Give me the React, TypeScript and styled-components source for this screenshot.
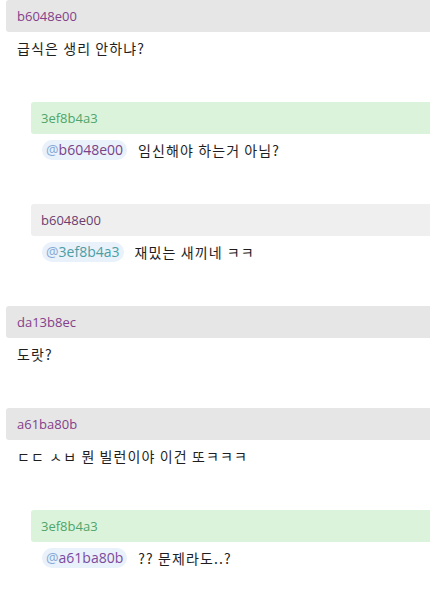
import React from 'react';
import styled, { createGlobalStyle } from 'styled-components';

const GlobalStyle = createGlobalStyle`
  html, body {
    margin: 0;
    padding: 0;
    background: #ffffff;
  }
  body {
    font-family: 'Open Sans', 'Noto Sans CJK KR', sans-serif;
    color: #222;
  }
`;

type Tone = 'gray' | 'light' | 'green';

const headerBg: Record<Tone, string> = {
  gray: '#e6e6e6',
  light: '#efefef',
  green: '#dbf3da',
};

const nameColor: Record<Tone, string> = {
  gray: '#84408a',
  light: '#6b3d6e',
  green: '#4fa56b',
};

const Thread = styled.div`
  width: 430px;
  display: flex;
  flex-direction: column;
`;

const Comment = styled.div<{ $reply?: boolean }>`
  display: flex;
  flex-direction: column;
  margin-left: ${p => (p.$reply ? '31px' : '6px')};
  margin-bottom: 30px;
`;

const Header = styled.div<{ $tone: Tone }>`
  height: 32px;
  line-height: 32px;
  padding-left: ${p => (p.$tone === 'gray' ? '11px' : '10px')};
  background: ${p => headerBg[p.$tone]};
  color: ${p => nameColor[p.$tone]};
  border-radius: 3px 0 0 3px;
  font-size: 13px;
`;

const Body = styled.div`
  display: flex;
  align-items: center;
  gap: 11px;
  padding: 6px 0 14px 11px;
  height: 20px;
  font-size: 14px;
  line-height: 20px;
  color: #222;
`;

const Text = styled.span`
  font-family: 'Noto Sans CJK KR', 'Open Sans', sans-serif;
  letter-spacing: 1.1px;
  color: #1e1e1e;
`;

const Mention = styled.span<{ $color: string }>`
  display: inline-flex;
  align-items: center;
  height: 20px;
  padding: 0 4px;
  border-radius: 10px;
  background: #e9f1fb;
  color: ${p => p.$color};
  font-family: 'Open Sans', sans-serif;
  font-size: 14px;
`;

const At = styled.span`
  color: #86a9d6;
`;

interface Item {
  user: string;
  tone: Tone;
  reply?: boolean;
  mention?: { name: string; color: string };
  text: string;
}

const items: Item[] = [
  { user: 'b6048e00', tone: 'gray', text: '급식은 생리 안하냐?' },
  {
    user: '3ef8b4a3',
    tone: 'green',
    reply: true,
    mention: { name: 'b6048e00', color: '#7a4388' },
    text: '임신해야 하는거 아님?',
  },
  {
    user: 'b6048e00',
    tone: 'light',
    reply: true,
    mention: { name: '3ef8b4a3', color: '#4c9ea3' },
    text: '재밌는 새끼네 ㅋㅋ',
  },
  { user: 'da13b8ec', tone: 'gray', text: '도랏?' },
  { user: 'a61ba80b', tone: 'gray', text: 'ㄷㄷ ㅅㅂ 뭔 빌런이야 이건 또ㅋㅋㅋ' },
  {
    user: '3ef8b4a3',
    tone: 'green',
    reply: true,
    mention: { name: 'a61ba80b', color: '#7b4a9c' },
    text: '?? 문제라도..?',
  },
];

export default function App() {
  return (
    <>
      <GlobalStyle />
      <Thread>
        {items.map((c, i) => (
          <Comment key={i} $reply={c.reply}>
            <Header $tone={c.tone}>{c.user}</Header>
            <Body>
              {c.mention && (
                <Mention $color={c.mention.color}>
                  <At>@</At>
                  {c.mention.name}
                </Mention>
              )}
              <Text>{c.text}</Text>
            </Body>
          </Comment>
        ))}
      </Thread>
    </>
  );
}
